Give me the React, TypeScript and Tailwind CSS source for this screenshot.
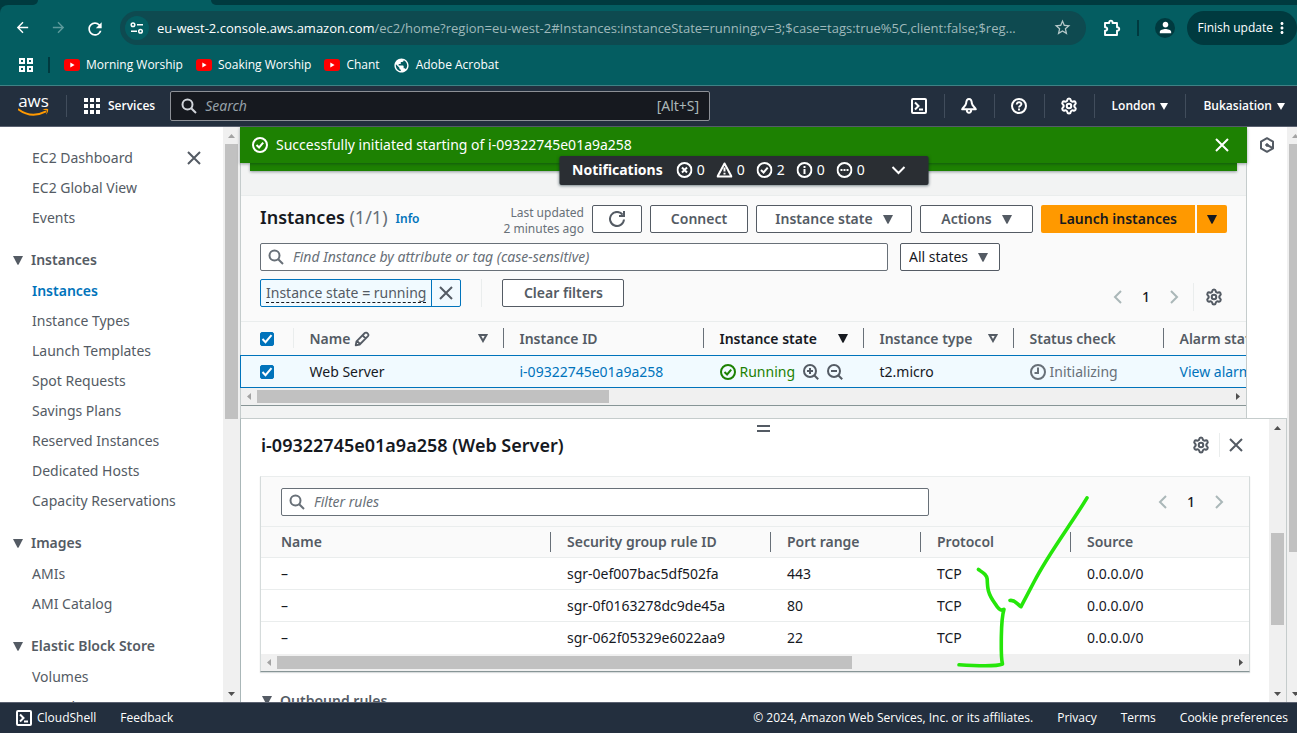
import React from "react";
import { Settings } from "lucide-react";
import {
  MdArrowBack,
  MdArrowForward,
  MdMoreVert,
  MdPerson,
  MdPublic,
  MdRefresh,
  MdStarBorder,
} from "react-icons/md";

type IconProps = { className?: string; children?: React.ReactNode };

function Icon({ className = "", children }: IconProps) {
  return (
    <svg
      viewBox="0 0 16 16"
      width="16"
      height="16"
      fill="none"
      stroke="currentColor"
      strokeWidth="2"
      aria-hidden="true"
      className={`shrink-0 ${className}`}
    >
      {children}
    </svg>
  );
}

const CaretDown = ({ className = "" }: IconProps) => (
  <svg viewBox="0 0 10 9" width="10" height="9" fill="currentColor" aria-hidden="true" className={`shrink-0 ${className}`}>
    <path d="M0 0h10L5.6 8.4q-.6.8-1.200 0z" />
  </svg>
);

const SmallCaret = () => (
  <svg viewBox="0 0 8 7" width="8" height="7" fill="currentColor" aria-hidden="true" className="shrink-0">
    <path d="M0 0h8L4 7z" />
  </svg>
);

const CaretOutline = () => (
  <svg viewBox="0 0 10 9" width="10" height="9" fill="none" stroke="currentColor" strokeWidth="2" aria-hidden="true" className="shrink-0">
    <path d="M1.600 1h6.800L5 7z" />
  </svg>
);

const SearchIcon = ({ className }: IconProps) => (
  <Icon className={className}>
    <circle cx="6.500" cy="6.500" r="5" />
    <path d="M10.200 10.200 15 15" />
  </Icon>
);

const CloseIcon = ({ className }: IconProps) => (
  <Icon className={className}>
    <path d="m2 2 12 12M14 2 2 14" />
  </Icon>
);

const CheckCircle = ({ className }: IconProps) => (
  <Icon className={className}>
    <circle cx="8" cy="8" r="7" />
    <path d="m4.500 8 2.600 2.500L11.200 5.700" />
  </Icon>
);

const ErrorIcon = () => (
  <Icon>
    <circle cx="8" cy="8" r="7" />
    <path d="m5.500 5.500 5 5m0-5-5 5" />
  </Icon>
);

const WarningIcon = () => (
  <Icon>
    <path d="M8 1.500 15 14.500H1z" strokeLinejoin="round" />
    <path d="M8 5.500v4M8 10.800v1.800" />
  </Icon>
);

const InfoIcon = () => (
  <Icon>
    <circle cx="8" cy="8" r="7" />
    <path d="M8 12V7M8 6V4" />
  </Icon>
);

const ProgressIcon = () => (
  <Icon>
    <circle cx="8" cy="8" r="7" />
    <path d="M4 8h2M7 8h2M10 8h2" />
  </Icon>
);

const ClockIcon = () => (
  <Icon>
    <circle cx="8" cy="8" r="7" />
    <path d="M8 3.500V9H4.500" />
  </Icon>
);

const RefreshIcon = () => (
  <Icon>
    <path d="M15 8.500A7 7 0 1 1 13.600 3.700" />
    <path d="M10 5h5V0" />
  </Icon>
);

const TerminalIcon = () => (
  <Icon>
    <rect x="1" y="1" width="14" height="14" rx="1" />
    <path d="m4 4.500 3.500 3.500L4 11.500M8 11.500h4" />
  </Icon>
);

const BellIcon = () => (
  <Icon>
    <path d="M8 1C6 1 5.300 3 5.100 5.300 4.800 8 1.800 9.300 1.200 11.300h13.600c-.6-2-3.600-3.300-3.900-6C10.700 3 10 1 8 1zM5.800 12c.3 3.800 4.100 3.800 4.400 0" strokeLinejoin="round" />
  </Icon>
);

const HelpIcon = () => (
  <Icon>
    <circle cx="8" cy="8" r="7" />
    <path d="M5.700 6.500C5.700 3.400 10.500 3.600 10.400 6.200 10.300 7.700 8 7.700 8 9.600M8 10.600v1.900" strokeWidth="1.900" />
  </Icon>
);

const ZoomIcon = ({ plus }: { plus?: boolean }) => (
  <Icon>
    <circle cx="7" cy="7" r="6" />
    <path d="m11.200 11.200 4 4M4 7h6" />
    {plus && <path d="M7 4v6" />}
  </Icon>
);

const EditIcon = () => (
  <Icon>
    <path d="m1.700 14.300.8-4L10.800 2c1.600-1.600 4.700 1.600 3.200 3.200L5.700 13.500zM8.500 4.300l3.200 3.200M3 10l3 3" strokeWidth="1.800" strokeLinejoin="round" />
  </Icon>
);

const ChevronLeft = () => (
  <Icon>
    <path d="M11 2 5 8l6 6" />
  </Icon>
);

const ChevronRight = () => (
  <Icon>
    <path d="m5 2 6 6-6 6" />
  </Icon>
);

const ExtensionIcon = () => (
  <svg viewBox="0 0 18 18" width="18" height="18" fill="none" stroke="currentColor" strokeWidth="1.900" strokeLinejoin="round" aria-hidden="true">
    <path d="M2 4h4.200C6 .8 9.800.8 9.600 4H14v4.200c3-.2 3 3.800 0 3.600V16H2v-4.200c3 .2 3-3.800 0-3.600z" />
  </svg>
);

const GearIcon = () => <Settings size={18} strokeWidth={2.700} aria-hidden="true" className="shrink-0" />;

const YouTubeIcon = () => (
  <svg viewBox="0 0 16 12" width="16" height="12" aria-hidden="true" className="shrink-0">
    <rect width="16" height="12" rx="3" fill="#f00" />
    <path d="M6.300 3.600v4.800L10.600 6z" fill="#fff" />
  </svg>
);

function VerticalScrollbar({ thumb, muted }: { thumb: string; muted?: boolean }) {
  return (
    <div className="flex w-[17px] shrink-0 flex-col items-center justify-between bg-[#f0f0f0] py-[6px]">
      <svg viewBox="0 0 7 4" width="7" height="4" className="mt-px shrink-0" aria-hidden="true">
        <path d="M0 4 3.500 0 7 4z" fill={muted ? "#a3a3a3" : "#505050"} />
      </svg>
      <div className="flex w-full flex-1 flex-col items-center py-[6px]">
        <div className={`w-[13px] shrink-0 bg-[#c1c1c1] ${thumb}`} />
      </div>
      <svg viewBox="0 0 7 4" width="7" height="4" className="shrink-0" aria-hidden="true">
        <path d="M0 0h7L3.500 4z" fill="#505050" />
      </svg>
    </div>
  );
}

function HorizontalScrollbar({ thumb }: { thumb: string }) {
  return (
    <div className="flex h-[17px] items-center gap-[6px] bg-[#f0f0f0] px-[6px]">
      <svg viewBox="0 0 4 7" width="4" height="7" aria-hidden="true">
        <path d="M4 0 0 3.500 4 7z" fill="#a3a3a3" />
      </svg>
      <div className="flex-1">
        <div className={`h-[13px] bg-[#c1c1c1] ${thumb}`} />
      </div>
      <svg viewBox="0 0 4 7" width="4" height="7" aria-hidden="true">
        <path d="M0 0l4 3.500L0 7z" fill="#505050" />
      </svg>
    </div>
  );
}

const bookmarks = [
  { label: "Morning Worship", icon: <YouTubeIcon /> },
  { label: "Soaking Worship", icon: <YouTubeIcon /> },
  { label: "Chant", icon: <YouTubeIcon /> },
  { label: "Adobe Acrobat", icon: <MdPublic size={17} className="shrink-0" /> },
];

function BrowserChrome() {
  return (
    <header className="shrink-0 border-b border-[#3f8285] bg-[#003a3f] font-['Open_Sans',sans-serif] text-white">
      <div className="flex h-[5px] bg-[#045d61]">
        <div className="w-[38px] rounded-br-md bg-[#003a3f]" />
        <div className="w-[173px]" />
        <div className="flex-1 rounded-bl-md bg-[#003a3f]" />
      </div>
      <div className="rounded-tl-lg bg-[#045d61]">
        <div className="flex h-[45px] items-center pl-[13px]">
          <button aria-label="Back" className="grid size-[18px] place-items-center">
            <MdArrowBack size={17} />
          </button>
          <button aria-label="Forward" className="ml-[18px] grid size-[18px] place-items-center text-[#5d9a9c]">
            <MdArrowForward size={17} />
          </button>
          <button aria-label="Reload" className="ml-[18px] grid size-[18px] place-items-center">
            <MdRefresh size={20} />
          </button>
          <div className="ml-[17px] flex h-[34px] min-w-0 flex-1 items-center rounded-full bg-[#0e4a50] pr-[14px] pl-[5px]">
            <button aria-label="Site information" className="grid size-6 shrink-0 place-items-center rounded-full bg-[#045d61]">
              <svg viewBox="0 0 14 12" width="14" height="12" fill="none" stroke="currentColor" strokeWidth="1.500" aria-hidden="true">
                <circle cx="3" cy="2.800" r="1.800" />
                <path d="M7 2.800h6M1 9.200h6" />
                <circle cx="10.500" cy="9.200" r="1.800" />
              </svg>
            </button>
            <p className="ml-2 min-w-0 flex-1 truncate text-[13px] leading-5 text-[#9fb9bb]">
              <span className="text-white">eu-west-2.console.aws.amazon.com</span>
              /ec2/home?region=eu-west-2#Instances:instanceState=running;v=3;$case=tags:true%5C,client:false;$reg...
            </p>
            <button aria-label="Bookmark this tab" className="ml-2 shrink-0 text-[#b5c8c9]">
              <MdStarBorder size={19} />
            </button>
          </div>
          <button aria-label="Extensions" className="ml-[17px]">
            <ExtensionIcon />
          </button>
          <span className="ml-4 h-4 w-[2px] bg-[#003a3f]" />
          <button aria-label="Profile" className="ml-4 grid size-5 place-items-center rounded-full bg-[#003a3f]">
            <MdPerson size={17} />
          </button>
          <button className="ml-3 flex h-[34px] shrink-0 items-center rounded-full bg-[#003a3f] pr-[6px] pl-[10px] text-[12px]">
            Finish update
            <MdMoreVert size={18} />
          </button>
        </div>
        <nav className="flex h-[35px] items-center pb-[5px] pl-[19px] text-[12px]">
          <button aria-label="Apps">
            <svg viewBox="0 0 14 14" width="14" height="14" fill="none" stroke="currentColor" strokeWidth="2" aria-hidden="true">
              <path d="M1 1h4v4H1zM9 1h4v4H9zM1 9h4v4H1zM9 9h4v4H9z" />
            </svg>
          </button>
          <span className="mr-[14px] ml-[15px] h-4 w-[2px] bg-[#003a3f]" />
          <div className="flex gap-[13px]">
            {bookmarks.map((b) => (
              <a key={b.label} href="#" className="flex items-center gap-[6px]">
                {b.icon}
                {b.label}
              </a>
            ))}
          </div>
        </nav>
      </div>
    </header>
  );
}

function ConsoleHeader() {
  const cell = "grid h-6 w-[50px] place-items-center border-r border-[#414d5c]";
  return (
    <header className="flex h-[41px] shrink-0 items-center border-b border-[#5a6170] bg-[#232f3e] font-['Open_Sans',sans-serif] text-[12px] font-semibold text-white">
      <a href="#" aria-label="AWS home" className="ml-[18px] flex w-[31px] flex-col items-center">
        <span className="h-[13px] text-[17px] leading-[11px] font-medium">aws</span>
        <svg viewBox="0 0 31 9" width="31" height="9" aria-hidden="true">
          <path d="M.5 1.500C9 7.800 19 8 27.500 3.700" fill="none" stroke="#f90" strokeWidth="2" strokeLinecap="round" />
          <path d="M24.500 1.700c2-1.200 6-1.200 5.700.2 0 1.500-1 3.600-2.200 4.600.6-1.700 1.400-3.400.7-4-.7-.7-2.700-.5-4.200-.8z" fill="#f90" />
        </svg>
      </a>
      <span className="ml-[17px] h-[22px] w-px bg-[#414d5c]" />
      <button className="ml-[17px] flex items-center gap-2">
        <svg viewBox="0 0 16 16" width="16" height="16" fill="currentColor" aria-hidden="true">
          <path d="M0 0h4v4H0zM6 0h4v4H6zM12 0h4v4h-4zM0 6h4v4H0zM6 6h4v4H6zM12 6h4v4h-4zM0 12h4v4H0zM6 12h4v4H6zM12 12h4v4h-4z" />
        </svg>
        Services
      </button>
      <label className="ml-[15px] flex h-[30px] w-[540px] items-center rounded-xs border border-[#8d9096] bg-[#16191f] px-[10px] font-['Noto_Sans',sans-serif] text-[14px] font-normal text-[#d1d5db]">
        <SearchIcon />
        <input aria-label="Search" placeholder="Search" className="ml-2 min-w-0 flex-1 bg-transparent outline-none placeholder:text-[#95a0a8] placeholder:italic" />
        <span className="text-[#aab7b8]">[Alt+S]</span>
      </label>
      <div className="ml-auto flex shrink-0 items-center">
        <button aria-label="CloudShell" className={cell}><TerminalIcon /></button>
        <button aria-label="Notifications" className={cell}><BellIcon /></button>
        <button aria-label="Support" className={cell}><HelpIcon /></button>
        <button aria-label="Settings" className={cell}><GearIcon /></button>
        <button className="flex h-6 items-center gap-[5px] border-r border-[#414d5c] px-[17px]">
          London <SmallCaret />
        </button>
        <button className="flex h-6 items-center gap-[5px] pr-3 pl-[17px]">
          Bukasiation <SmallCaret />
        </button>
      </div>
    </header>
  );
}

const navGroups = [
  { title: "", items: ["EC2 Dashboard", "EC2 Global View", "Events"] },
  {
    title: "Instances",
    items: ["Instances", "Instance Types", "Launch Templates", "Spot Requests", "Savings Plans", "Reserved Instances", "Dedicated Hosts", "Capacity Reservations"],
  },
  { title: "Images", items: ["AMIs", "AMI Catalog"] },
  { title: "Elastic Block Store", items: ["Volumes", "Snapshots"] },
];

function Sidebar() {
  return (
    <aside className="flex w-[240px] shrink-0">
      <nav className="relative min-w-0 flex-1 overflow-hidden pt-4 text-[#545b64]">
        <button aria-label="Close navigation" className="absolute top-[23px] right-[21px]">
          <CloseIcon />
        </button>
        {navGroups.map((g) => (
          <section key={g.title} className="mb-3">
            {g.title && (
              <button className="flex h-[31px] items-center gap-2 pb-px pl-[13px] font-semibold">
                <CaretDown />
                {g.title}
              </button>
            )}
            <ul className="pl-8">
              {g.items.map((item) => (
                <li key={item} className="flex h-[30px] items-center">
                  <a href="#" className={item === "Instances" ? "font-semibold text-[#0073bb]" : ""}>
                    {item}
                  </a>
                </li>
              ))}
            </ul>
          </section>
        ))}
      </nav>
      <VerticalScrollbar thumb="h-[275px]" muted />
    </aside>
  );
}

function Checkbox({ label }: { label: string }) {
  return (
    <label className="relative block size-[14px]">
      <input type="checkbox" defaultChecked aria-label={label} className="block size-[14px] appearance-none rounded-xs border border-[#687078] bg-white checked:border-[#0073bb] checked:bg-[#0073bb]" />
      <svg viewBox="0 0 14 14" width="14" height="14" fill="none" stroke="#fff" strokeWidth="2" className="pointer-events-none absolute inset-0" aria-hidden="true">
        <path d="m2.500 7 3 3.200 6-7" />
      </svg>
    </label>
  );
}

const statuses = [
  { name: "Errors", icon: <ErrorIcon />, count: 0 },
  { name: "Warnings", icon: <WarningIcon />, count: 0 },
  { name: "Success", icon: <CheckCircle />, count: 2 },
  { name: "Information", icon: <InfoIcon />, count: 0 },
  { name: "In progress", icon: <ProgressIcon />, count: 0 },
];

function Flashbar() {
  return (
    <div className="relative -mx-px shrink-0 text-white">
      <div className="relative flex h-9 items-center bg-[#1d8102] pr-[17px] pl-3 shadow-[0_1px_3px_rgba(0,28,36,0.4)]">
        <CheckCircle />
        <span className="ml-2">Successfully initiated starting of i-09322745e01a9a258</span>
        <button aria-label="Dismiss" className="ml-auto">
          <CloseIcon />
        </button>
      </div>
      <div className="mx-[10px] h-2 bg-[#1d8102] shadow-[0_1px_3px_rgba(0,28,36,0.4)]" />
      <button className="absolute top-[29px] left-1/2 flex h-[29px] w-[369px] -translate-x-1/2 items-center rounded-xs bg-[#2a2e33] pb-px pl-[13px] shadow-[0_1px_3px_rgba(0,28,36,0.5)]">
        <span className="font-bold">Notifications</span>
        <span className="ml-[14px] flex gap-3">
          {statuses.map((s) => (
            <span key={s.name} title={s.name} className="flex items-center gap-1">
              {s.icon}
              {s.count}
            </span>
          ))}
        </span>
        <Icon className="ml-[26px]">
          <path d="m2 5 6 6 6-6" />
        </Icon>
      </button>
    </div>
  );
}

const outlineButton = "flex h-7 shrink-0 items-center justify-center rounded-xs border border-[#545b64] bg-white font-semibold text-[#545b64]";

function Pagination() {
  return (
    <div className="flex items-center text-[#aab7b8]">
      <button aria-label="Previous page"><ChevronLeft /></button>
      <span className="w-10 text-center font-medium text-[#16191f]">1</span>
      <button aria-label="Next page"><ChevronRight /></button>
    </div>
  );
}

function InstancesTable() {
  const th = "relative h-[34px] px-4 text-left font-semibold whitespace-nowrap";
  const sep = <span className="absolute top-[6px] right-0 h-5 w-px bg-[#687078]" />;
  return (
    <div className="-ml-px overflow-hidden">
      <table className="w-[1133px] table-fixed border-collapse">
        <colgroup>
          <col className="w-[53px]" />
          <col className="w-[210px]" />
          <col className="w-[200px]" />
          <col className="w-[160px]" />
          <col className="w-[150px]" />
          <col className="w-[150px]" />
          <col className="w-[210px]" />
        </colgroup>
        <thead>
          <tr className="border-t border-[#eaeded] text-[#545b64]">
            <th className="relative pl-[19px]">
              <Checkbox label="Select all instances" />
              <span className="absolute top-[6px] right-0 h-5 w-px bg-[#eaeded]" />
            </th>
            <th className={th}>
              <span className="flex items-center gap-1">
                Name <EditIcon />
                <span className="ml-auto"><CaretOutline /></span>
              </span>
              {sep}
            </th>
            <th className={th}>Instance ID{sep}</th>
            <th className={`${th} text-[#16191f]`}>
              <span className="flex items-center justify-between">Instance state <CaretDown /></span>
              {sep}
            </th>
            <th className={th}>
              <span className="flex items-center justify-between">Instance type <CaretOutline /></span>
              {sep}
            </th>
            <th className={th}>Status check{sep}</th>
            <th className={th}>Alarm status</th>
          </tr>
        </thead>
        <tbody>
          <tr className="h-8 border border-[#0073bb] bg-[#f1faff]">
            <td className="pl-[19px]"><Checkbox label="Select Web Server" /></td>
            <td className="px-4">Web Server</td>
            <td className="px-4"><a href="#" className="text-[#0073bb]">i-09322745e01a9a258</a></td>
            <td className="pl-4">
              <span className="flex items-center gap-1 text-[#1d8102]">
                <CheckCircle />
                Running
                <span className="ml-1 flex gap-2 text-[#545b64]">
                  <button aria-label="Filter for running"><ZoomIcon plus /></button>
                  <button aria-label="Filter out running"><ZoomIcon /></button>
                </span>
              </span>
            </td>
            <td className="px-4">t2.micro</td>
            <td className="px-4">
              <span className="flex items-center gap-1 text-[#687078]"><ClockIcon />Initializing</span>
            </td>
            <td className="px-4"><a href="#" className="text-[#0073bb]">View alarms</a></td>
          </tr>
        </tbody>
      </table>
    </div>
  );
}

function InstancesPanel() {
  return (
    <section className="mt-6 border-y border-t-[#eaeded] border-b-[#879596] bg-[#fafafa]">
      <div className="px-[19px]">
        <div className="flex items-center pt-[9px]">
          <h1 className="-mt-1 text-[18px] font-semibold">
            Instances <span className="font-normal text-[#687078]">(1/1)</span>
          </h1>
          <a href="#" className="ml-2 text-[12px] font-semibold text-[#0073bb]">Info</a>
          <p className="-my-1 ml-auto pt-1 text-right text-[12px] leading-4 text-[#687078]">
            Last updated
            <br />2 minutes ago
          </p>
          <div className="ml-2 flex shrink-0 gap-2">
            <button aria-label="Refresh" className={`${outlineButton} w-[50px]`}><RefreshIcon /></button>
            <button className={`${outlineButton} w-[98px]`}>Connect</button>
            <button className={`${outlineButton} w-[156px] gap-[10px]`}>Instance state <CaretDown /></button>
            <button className={`${outlineButton} w-[113px] gap-[10px]`}>Actions <CaretDown /></button>
            <div className="flex gap-[2px] text-[#16191f]">
              <button className="h-7 w-[154px] rounded-l-xs bg-[#f90] font-semibold">Launch instances</button>
              <button aria-label="More launch options" className="grid h-7 w-[30px] place-items-center rounded-r-xs bg-[#f90]"><CaretDown /></button>
            </div>
          </div>
        </div>
        <div className="mt-[10px] flex gap-3">
          <label className="flex h-7 w-[628px] items-center rounded-xs border border-[#687078] bg-white px-[7px] text-[#687078]">
            <SearchIcon />
            <input aria-label="Find instance" placeholder="Find Instance by attribute or tag (case-sensitive)" className="ml-[9px] min-w-0 flex-1 bg-transparent outline-none placeholder:text-[#687078] placeholder:italic" />
          </label>
          <div className="relative">
            <select aria-label="State filter" className="h-7 w-[100px] appearance-none rounded-xs border border-[#545b64] bg-white pl-2">
              <option>All states</option>
            </select>
            <CaretDown className="pointer-events-none absolute top-[10px] right-3 text-[#545b64]" />
          </div>
        </div>
        <div className="mt-2 flex h-9 items-center pb-2">
          <div className="flex h-7 rounded-xs border border-[#0073bb] bg-[#f1faff]">
            <button className="px-[5px]">
              <span className="border-b border-dashed border-[#16191f] text-[#545b64]">
                Instance state <b className="font-semibold">=</b> running
              </span>
            </button>
            <button aria-label="Remove filter" className="border-l border-[#0073bb] px-[6px] text-[#545b64]"><CloseIcon /></button>
          </div>
          <span className="ml-5 h-7 w-px bg-[#eaeded]" />
          <button className={`${outlineButton} ml-5 w-[122px]`}>Clear filters</button>
          <div className="mt-2 ml-auto flex items-center pr-1">
            <Pagination />
            <span className="ml-[11px] h-7 w-px bg-[#eaeded]" />
            <button aria-label="Preferences" className="ml-[11px] text-[#545b64]"><GearIcon /></button>
          </div>
        </div>
        <div className="h-[6px]" />
      </div>
      <InstancesTable />
      <HorizontalScrollbar thumb="w-[352px]" />
    </section>
  );
}

const rules = [
  { id: "sgr-0ef007bac5df502fa", port: "443" },
  { id: "sgr-0f0163278dc9de45a", port: "80" },
  { id: "sgr-062f05329e6022aa9", port: "22" },
];

function RulesTable() {
  const heads = ["Name", "Security group rule ID", "Port range", "Protocol", "Source"];
  return (
    <table className="w-full table-fixed border-collapse">
      <colgroup>
        <col className="w-[290px]" />
        <col className="w-[220px]" />
        <col className="w-[150px]" />
        <col className="w-[150px]" />
        <col />
      </colgroup>
      <thead>
        <tr className="h-[31px] border-y border-[#eaeded] bg-[#fafafa] text-[#545b64]">
          {heads.map((h, i) => (
            <th key={h} className="relative px-4 text-left font-semibold first:pl-5">
              {h}
              {i < heads.length - 1 && <span className="absolute top-[5px] right-0 h-5 w-px bg-[#687078]" />}
            </th>
          ))}
        </tr>
      </thead>
      <tbody>
        {rules.map((r) => (
          <tr key={r.id} className="h-8 border-b border-[#eaeded] last:border-0">
            <td className="pl-5">–</td>
            <td className="px-4">{r.id}</td>
            <td className="px-4">{r.port}</td>
            <td className="px-4">TCP</td>
            <td className="px-4">0.0.0.0/0</td>
          </tr>
        ))}
      </tbody>
    </table>
  );
}

function DetailsPanel() {
  return (
    <section className="relative flex min-h-0 flex-1 border border-b-0 border-[#c5cccc] border-l-[#aab7b8] bg-white">
      <div className="min-w-0 flex-1 overflow-hidden px-[19px]">
        <div className="flex justify-center pt-[6px] pl-4">
          <button aria-label="Resize panel" className="h-[7px] w-[13px] border-y-2 border-[#545b64]" />
        </div>
        <div className="flex h-[26px] items-center pl-px text-[#545b64]">
          <h2 className="text-[18px] font-semibold text-[#16191f]">i-09322745e01a9a258 (Web Server)</h2>
          <button aria-label="Panel preferences" className="ml-auto"><GearIcon /></button>
          <span className="ml-[9px] h-6 w-px bg-[#eaeded]" />
          <button aria-label="Close panel" className="mr-[6px] ml-2"><CloseIcon /></button>
        </div>
        <div className="mt-[18px] border border-[#d5dbdb] border-t-[#eaeded] border-b-[#879596] shadow-[0_1px_1px_rgba(0,28,36,0.15)]">
          <div className="flex h-[49px] items-center bg-[#fafafa] pr-[22px] pl-5">
            <label className="flex h-7 w-[648px] items-center rounded-xs border border-[#687078] bg-white px-[7px] text-[#687078]">
              <SearchIcon />
              <input aria-label="Filter rules" placeholder="Filter rules" className="ml-[9px] min-w-0 flex-1 bg-transparent outline-none placeholder:text-[#687078] placeholder:italic" />
            </label>
            <div className="ml-auto"><Pagination /></div>
          </div>
          <RulesTable />
          <HorizontalScrollbar thumb="w-[575px]" />
        </div>
        <button className="mt-[18px] flex items-center gap-2 font-semibold text-[#545b64]">
          <CaretDown className="ml-[2px]" />
          Outbound rules
        </button>
      </div>
      <div className="flex">
        <VerticalScrollbar thumb="mt-[97px] h-[92px]" />
      </div>
      <svg viewBox="0 0 140 180" width="140" height="180" fill="none" stroke="#25e60a" strokeWidth="3.600" strokeLinecap="round" strokeLinejoin="round" className="pointer-events-none absolute top-[76px] left-[714px]" aria-hidden="true">
        <path d="M23.400 74.500c5 3.500 8.200 5 8.800 9.500.3 9 .3 14 7.800 24.500 2.500 4 5.500 8.500 9 5.800-2.500 8-2.500 19-2.700 29.700-.1 10-.3 20 1.200 25-4 1.800-22 2.200-43.500.8" />
        <path d="M55 105.500c5-1 7.500 4 11 6.200L79.500 86C94 58 117 28 132 2.800" />
      </svg>
    </section>
  );
}

function Footer() {
  return (
    <footer className="flex h-[31px] shrink-0 items-center border-t border-[#5a6170] bg-[#232f3e] pr-[9px] pl-4 font-['Open_Sans',sans-serif] text-[12px] font-medium whitespace-nowrap text-white">
      <button className="flex items-center gap-[5px]"><TerminalIcon />CloudShell</button>
      <a href="#" className="ml-6">Feedback</a>
      <span className="ml-auto">© 2024, Amazon Web Services, Inc. or its affiliates.</span>
      <a href="#" className="ml-6">Privacy</a>
      <a href="#" className="ml-6">Terms</a>
      <a href="#" className="ml-6">Cookie preferences</a>
    </footer>
  );
}

export default function App() {
  return (
    <div className="flex h-screen flex-col overflow-hidden bg-white font-['Noto_Sans',sans-serif] text-[14px] leading-[22px] text-[#16191f]">
      <BrowserChrome />
      <ConsoleHeader />
      <div className="flex min-h-0 flex-1">
        <Sidebar />
        <div className="flex min-w-0 flex-1 flex-col">
          <div className="flex shrink-0">
            <main className="min-w-0 flex-1 border-r border-l border-[#c5cccc] bg-[#f2f3f3] pb-3">
              <Flashbar />
              <InstancesPanel />
            </main>
            <div className="flex w-10 shrink-0 justify-center pt-[10px] text-[#545b64]">
              <button aria-label="Open tools" className="h-4">
                <Icon>
                  <path d="m8 1.200 6 3.400v6.800l-6 3.400-6-3.400V4.600z" strokeLinejoin="round" />
                  <path d="M13.500 11 8 8" />
                  <circle cx="8" cy="8" r="1.300" fill="currentColor" strokeWidth="1" />
                </Icon>
              </button>
            </div>
          </div>
          <DetailsPanel />
        </div>
        <div className="flex w-[10px] shrink-0 overflow-hidden">
          <VerticalScrollbar thumb="h-[408px]" muted />
        </div>
      </div>
      <Footer />
    </div>
  );
}
